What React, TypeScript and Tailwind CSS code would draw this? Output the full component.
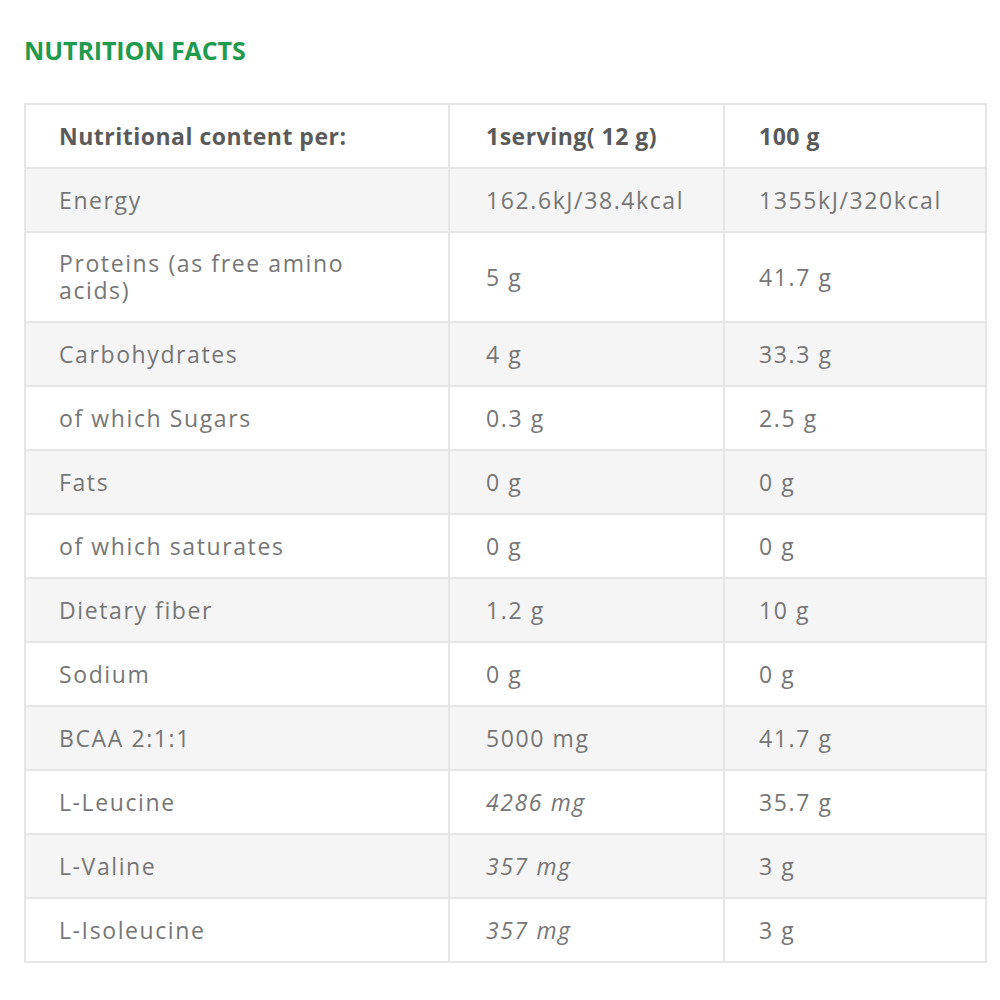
import React from 'react';

type Row = { name: string; serving: string; per100: string; italic?: boolean };

const rows: Row[] = [
  { name: 'Energy', serving: '162.6kJ/38.4kcal', per100: '1355kJ/320kcal' },
  { name: 'Proteins (as free amino acids)', serving: '5 g', per100: '41.7 g' },
  { name: 'Carbohydrates', serving: '4 g', per100: '33.3 g' },
  { name: 'of which Sugars', serving: '0.3 g', per100: '2.5 g' },
  { name: 'Fats', serving: '0 g', per100: '0 g' },
  { name: 'of which saturates', serving: '0 g', per100: '0 g' },
  { name: 'Dietary fiber', serving: '1.2 g', per100: '10 g' },
  { name: 'Sodium', serving: '0 g', per100: '0 g' },
  { name: 'BCAA 2:1:1', serving: '5000 mg', per100: '41.7 g' },
  { name: 'L-Leucine', serving: '4286 mg', per100: '35.7 g', italic: true },
  { name: 'L-Valine', serving: '357 mg', per100: '3 g', italic: true },
  { name: 'L-Isoleucine', serving: '357 mg', per100: '3 g', italic: true },
];

export default function App() {
  return (
    <div
      className="w-[1000px] h-[1000px] bg-white pt-[34px] pl-[24px]"
      style={{ fontFamily: '"Open Sans", "Noto Sans", sans-serif' }}
    >
      <h2 className="text-[25px] font-bold text-[#1f9a4e] leading-[32px] tracking-[-0.1px]">
        NUTRITION FACTS
      </h2>

      <table className="mt-[37px] w-[961px] border-collapse table-fixed text-[23px] tracking-[1.6px] text-[#767676]">
        <colgroup>
          <col className="w-[424px]" />
          <col className="w-[275px]" />
          <col className="w-[262px]" />
        </colgroup>
        <thead>
          <tr className="h-[64px] bg-white">
            <th className="border-2 border-[#e6e6e6] pl-[33px] text-left font-bold tracking-[0.5px] text-[#5a5a5a]">
              Nutritional content per:
            </th>
            <th className="border-2 border-[#e6e6e6] pl-[36px] text-left font-bold tracking-[0.5px] text-[#5a5a5a]">
              1serving( 12 g)
            </th>
            <th className="border-2 border-[#e6e6e6] pl-[34px] text-left font-bold tracking-[0.5px] text-[#5a5a5a]">
              100 g
            </th>
          </tr>
        </thead>
        <tbody>
          {rows.map((r, i) => (
            <tr
              key={r.name}
              className={`${i === 1 ? 'h-[90px]' : 'h-[64px]'} ${i % 2 === 0 ? 'bg-[#f5f5f5]' : 'bg-white'}`}
            >
              <td className="border-2 border-[#e6e6e6] pl-[33px] pr-[38px] leading-[27px]">
                {r.name}
              </td>
              <td className={`border-2 border-[#e6e6e6] pl-[36px] ${r.italic ? 'italic' : ''}`}>
                {r.serving}
              </td>
              <td className="border-2 border-[#e6e6e6] pl-[34px]">{r.per100}</td>
            </tr>
          ))}
        </tbody>
      </table>
    </div>
  );
}
